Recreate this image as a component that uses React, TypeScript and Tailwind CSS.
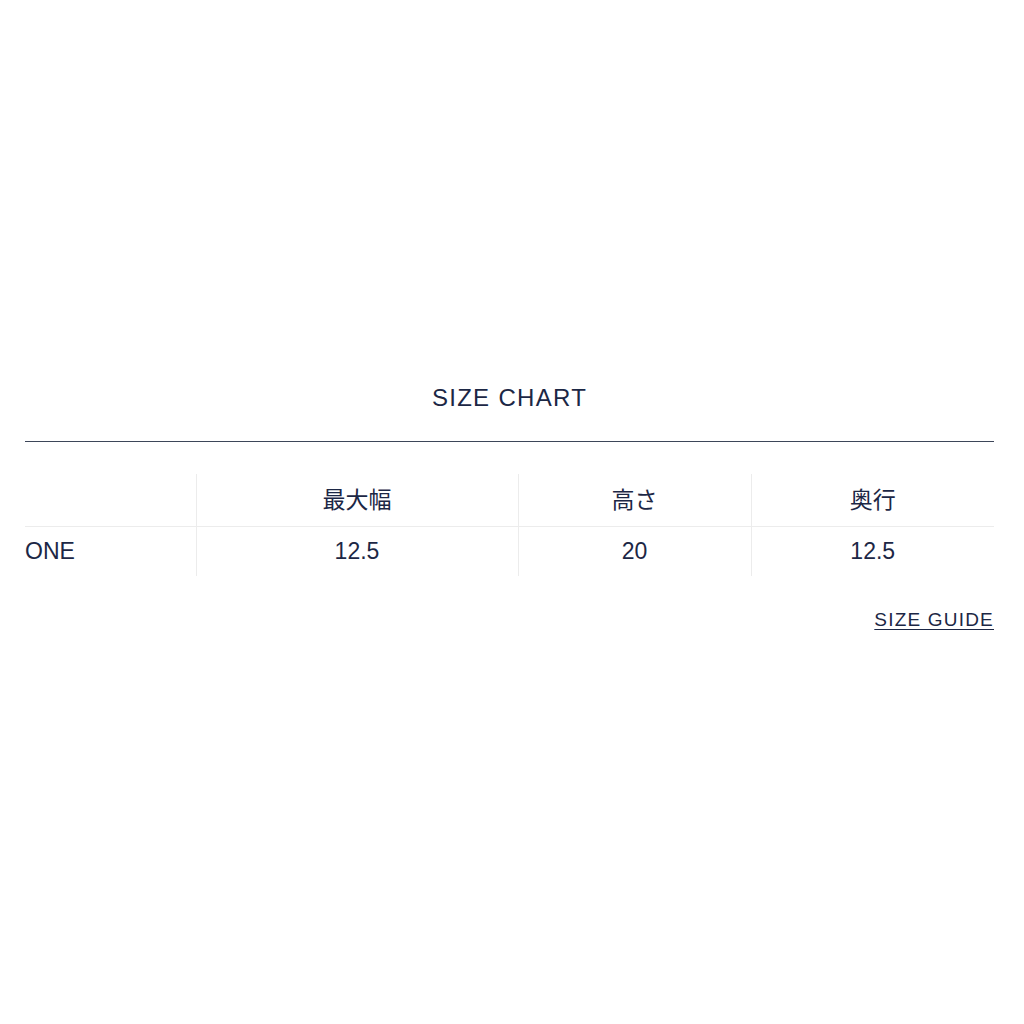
const headers = ["最大幅", "高さ", "奥行"];
const rows = [{ size: "ONE", values: ["12.5", "20", "12.5"] }];

const App = (): JSX.Element => {
  return (
    <div
      className="min-h-[1024px] bg-white text-[#1c2745]"
      style={{ fontFamily: '"Liberation Sans", Arial, "Noto Sans CJK JP", sans-serif' }}
    >
      <section className="pl-[25px] pr-[30px] pt-[384px]">
        <h2 className="text-center text-[24px] leading-[28px] tracking-[1.3px]">SIZE CHART</h2>
        <div className="mt-[29px] border-t border-[#3d4659]"></div>
        <table className="w-full mt-[32px] border-collapse text-[23px]">
          <colgroup>
            <col className="w-[171px]" />
            <col className="w-[322px]" />
            <col className="w-[233px]" />
            <col className="w-[243px]" />
          </colgroup>
          <thead>
            <tr className="border-b border-[#ececec]">
              <th></th>
              {headers.map((h) => (
                <th key={h} className="h-[52px] font-normal text-center border-l border-[#ececec]">
                  {h}
                </th>
              ))}
            </tr>
          </thead>
          <tbody>
            {rows.map((r) => (
              <tr key={r.size}>
                <td className="h-[50px] text-left">{r.size}</td>
                {r.values.map((v, i) => (
                  <td key={i} className="text-center border-l border-[#ececec]">
                    {v}
                  </td>
                ))}
              </tr>
            ))}
          </tbody>
        </table>
        <div className="flex justify-end mt-[30px]">
          <a className="text-[19px] underline underline-offset-[3px] tracking-[1.2px]">SIZE GUIDE</a>
        </div>
      </section>
    </div>
  );
};

export default App;
